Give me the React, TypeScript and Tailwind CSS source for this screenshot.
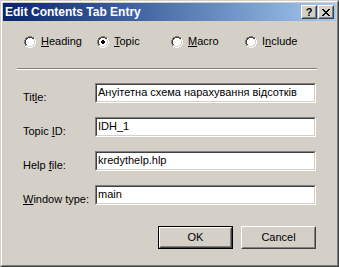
import React from "react"

const font = "font-['Liberation_Sans',Arial,sans-serif]"

function Radio({ checked }: { checked?: boolean }) {
  return (
    <svg width="12" height="12" viewBox="0 0 12 12" shapeRendering="crispEdges" className="shrink-0">
      {/* outer ring: shadow top-left, highlight bottom-right */}
      <path d="M4 0h4v1H4zM2 1h2v1H2zM8 1h2v1H8zM1 2h1v2H1zM0 4h1v4H0zM1 8h1v2H1z" fill="#808080" />
      <path d="M10 2h1v2h-1zM11 4h1v4h-1zM10 8h1v2h-1zM8 10h2v1H8zM2 10h2v1H2zM4 11h4v1H4z" fill="#ffffff" />
      {/* inner ring */}
      <path d="M4 1h4v1H4zM2 2h2v1H2zM8 2h2v1H8zM2 3h1v1H2zM1 4h1v4H1zM2 8h1v1H2z" fill="#404040" />
      <path d="M9 3h1v1H9zM10 4h1v4h-1zM9 8h1v1H9zM8 9h2v1H8zM2 9h2v1H2zM4 10h4v1H4z" fill="#d4d0c8" />
      {/* fill */}
      <path d="M4 2h4v1h1v1h1v4H9v1H8v1H4V9H3V8H2V4h1V3h1z" fill="#ffffff" />
      {checked && <path d="M5 4h2v1h1v2H7v1H5V7H4V5h1z" fill="#000000" />}
    </svg>
  )
}

function RadioItem({ label, checked, width }: { label: React.ReactNode; checked?: boolean; width: string }) {
  return (
    <div className={`flex items-center gap-[5px] ${width}`}>
      <Radio checked={checked} />
      <span className="text-[11px] leading-[13px] text-black">{label}</span>
    </div>
  )
}

function Field({ label, value }: { label: React.ReactNode; value: string }) {
  return (
    <div className="flex h-[20px] items-end">
      <span className="w-[72px] mb-[-1px] text-[11px] leading-[13px] text-black">{label}</span>
      <div className="w-[221px] h-[20px] border border-t-[#808080] border-l-[#808080] border-r-white border-b-white">
        <div className="h-full border border-t-[#404040] border-l-[#404040] border-r-[#d4d0c8] border-b-[#d4d0c8] bg-white pl-px">
          <span className="block text-[11px] leading-[15px] text-black whitespace-nowrap">{value}</span>
        </div>
      </div>
    </div>
  )
}

function Button({ children, isDefault }: { children: React.ReactNode; isDefault?: boolean }) {
  const inner = (
    <div className="h-full border border-t-white border-l-white border-r-[#404040] border-b-[#404040]">
      <div className="h-full flex items-center justify-center border border-t-[#d4d0c8] border-l-[#d4d0c8] border-r-[#808080] border-b-[#808080] text-[11px] text-black">
        {children}
      </div>
    </div>
  )
  return (
    <div className={`w-[75px] h-[23px] ${isDefault ? "border border-black" : ""}`}>{inner}</div>
  )
}

function CaptionButton({ children }: { children: React.ReactNode }) {
  return (
    <div className="w-[16px] h-[14px] border border-t-white border-l-white border-r-[#404040] border-b-[#404040] bg-[#d4d0c8]">
      <div className="h-full flex items-center justify-center border border-t-[#d4d0c8] border-l-[#d4d0c8] border-r-[#808080] border-b-[#808080]">
        {children}
      </div>
    </div>
  )
}

export default function App() {
  return (
    <div className={`w-[339px] h-[267px] flex border border-t-[#d4d0c8] border-l-[#d4d0c8] border-r-[#404040] border-b-[#404040] bg-[#d4d0c8] ${font}`}>
      <div className="flex-1 flex flex-col border border-t-white border-l-white border-r-[#808080] border-b-[#808080] p-px">
        {/* Title bar */}
        <div className="h-[18px] flex items-center bg-gradient-to-r from-[#0a246a] to-[#a6caf0] pl-[2px] pr-[2px]">
          <span className="flex-1 text-[12px] font-bold text-white leading-none">Edit Contents Tab Entry</span>
          <div className="flex gap-[1px]">
            <CaptionButton>
              <span className="text-[11px] font-bold leading-none text-black mt-[1px]">?</span>
            </CaptionButton>
            <CaptionButton>
              <svg width="8" height="7" viewBox="0 0 8 7" shapeRendering="crispEdges">
                <path d="M0 0h2v1h1v1h2V1h1V0h2v1H7v1H6v1H5v1h1v1h1v1h1v1H6V6H5V5H3v1H2v1H0V6h1V5h1V4h1V3H2V2H1V1H0z" fill="#000" />
              </svg>
            </CaptionButton>
          </div>
        </div>

        {/* Radio row */}
        <div className="flex items-center mt-[14px] pl-[21px]">
          <RadioItem width="w-[73px]" label={<><u>H</u>eading</>} />
          <RadioItem width="w-[74px]" checked label={<><u>T</u>opic</>} />
          <RadioItem width="w-[74px]" label={<><u>M</u>acro</>} />
          <RadioItem width="w-[74px]" label={<>I<u>n</u>clude</>} />
        </div>

        {/* Separator */}
        <div className="mt-[20px] ml-[14px] w-[300px] border-t border-b border-t-[#808080] border-b-white" />

        {/* Fields */}
        <div className="flex flex-col gap-[14px] mt-[13px] pl-[20px]">
          <Field label={<>Tit<u>l</u>e:</>} value="Ануітетна схема нарахування відсотків" />
          <Field label={<>Topic <u>I</u>D:</>} value="IDH_1" />
          <Field label={<>Help <u>f</u>ile:</>} value="kredythelp.hlp" />
          <Field label={<><u>W</u>indow type:</>} value="main" />
        </div>

        {/* Buttons */}
        <div className="flex justify-end gap-[8px] mt-[21px] pr-[20px]">
          <Button isDefault>OK</Button>
          <Button>Cancel</Button>
        </div>
      </div>
    </div>
  )
}
